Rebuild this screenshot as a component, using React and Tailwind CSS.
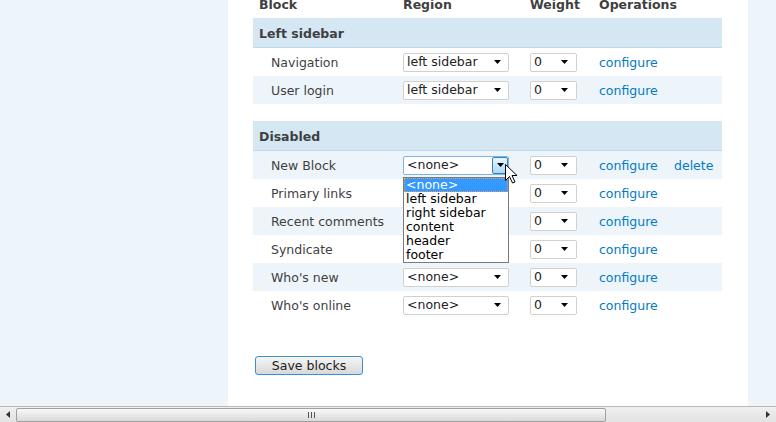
import React from "react";

function Arrow() {
  return (
    <svg width="7" height="4" viewBox="0 0 7 4" className="block">
      <path d="M0 0 H7 L3.5 4 Z" fill="#000" />
    </svg>
  );
}

function RegionSelect({ value }) {
  return (
    <div className="w-[106px] h-[19px] border border-[#d0d0d0] rounded-[2px] bg-white flex items-center justify-between pl-[3px] pr-[7px] text-[#222]">
      <span className="pt-[1px]">{value}</span>
      <Arrow />
    </div>
  );
}

function WeightSelect() {
  return (
    <div className="w-[47px] h-[19px] border border-[#d0d0d0] rounded-[2px] bg-white flex items-center justify-between pl-[3px] pr-[8px] text-[#222]">
      <span className="pt-[1px]">0</span>
      <Arrow />
    </div>
  );
}

function ActiveSelect() {
  return (
    <div className="relative w-[106px] h-[19px] border border-[#7eb4ea] rounded-[2px] bg-white flex items-center pl-[3px] text-[#222]">
      <span className="pt-[1px]">&lt;none&gt;</span>
      <div className="absolute right-[0px] top-[0px] w-[16px] h-[17px] border border-[#3c7fb1] rounded-[2px] bg-gradient-to-b from-[#eaf6fd] to-[#a7d9f5] flex items-center justify-center">
        <Arrow />
      </div>
      <div className="absolute left-[-1px] top-[20px] w-[106px] border border-[#7a7a7a] bg-white z-10 leading-[14px] text-black">
        <div className="h-[14px] bg-[#3399ff] text-white border border-dotted border-[#e0a060] pl-[1px] leading-[12px]">&lt;none&gt;</div>
        <div className="h-[14px] pl-[2px]">left sidebar</div>
        <div className="h-[14px] pl-[2px]">right sidebar</div>
        <div className="h-[14px] pl-[2px]">content</div>
        <div className="h-[14px] pl-[2px]">header</div>
        <div className="h-[14px] pl-[2px]">footer</div>
      </div>
      <svg className="absolute left-[101px] top-[7px] z-20" width="13" height="20" viewBox="0 0 13 20">
        <path d="M0.5 0.5 L0.5 16.5 L4.5 12.5 L7.5 19 L10 18 L7 11.5 L12 11.5 Z" fill="#fff" stroke="#000" strokeWidth="1" strokeLinejoin="miter" />
      </svg>
    </div>
  );
}

function Row({ name, odd, region, active, del }) {
  return (
    <div className={odd ? "h-[28px] bg-[#edf5fa] flex items-center" : "h-[28px] bg-white flex items-center"}>
      <div className="w-[150px] pl-[18px] pt-[2px] text-[#3f3f3f]">{name}</div>
      <div className="w-[127px]">{active ? <ActiveSelect /> : <RegionSelect value={region} />}</div>
      <div className="w-[69px]"><WeightSelect /></div>
      <div className="w-[75px] pt-[2px] text-[#027ac6]">configure</div>
      {del ? <div className="pt-[2px] text-[#027ac6]">delete</div> : null}
    </div>
  );
}

function RegionHeader({ title }) {
  return (
    <div className="h-[30px] bg-[#d4e7f3] border-b border-[#bcdaee] flex items-center pl-[6px] pt-[3px] font-bold text-[#3f3f3f]">
      {title}
    </div>
  );
}

export default function App() {
  return (
    <div className="w-[776px] h-[422px] overflow-hidden flex flex-col bg-[#edf5fa] text-[12.5px] text-[#494949] font-['DejaVu_Sans',Verdana,sans-serif]">
      <div className="flex h-[406px]">
        <div className="w-[228px] bg-[#edf5fa]" />
        <div className="w-[520px] bg-white pl-[25px] pr-[26px]">
          <div className="h-[18px] overflow-hidden flex font-bold text-[#3f3f3f]">
            <div className="w-[150px] pl-[6px] -mt-[2px] leading-[14px]">Block</div>
            <div className="w-[127px] -mt-[2px] leading-[14px]">Region</div>
            <div className="w-[69px] -mt-[2px] leading-[14px]">Weight</div>
            <div className="-mt-[2px] leading-[14px]">Operations</div>
          </div>
          <RegionHeader title="Left sidebar" />
          <Row name="Navigation" region="left sidebar" />
          <Row name="User login" region="left sidebar" odd />
          <div className="h-[17px]" />
          <RegionHeader title="Disabled" />
          <Row name="New Block" odd active del />
          <Row name="Primary links" region="<none>" />
          <Row name="Recent comments" region="<none>" odd />
          <Row name="Syndicate" region="<none>" />
          <Row name="Who's new" region="<none>" odd />
          <Row name="Who's online" region="<none>" />
          <div className="pt-[37px] pl-[2px]">
            <button className="w-[108px] h-[19px] border border-[#3c8fd0] rounded-[3px] bg-gradient-to-b from-[#f6f6f6] to-[#d8d8d8] text-[#222] text-[12.5px] leading-[15px] font-['DejaVu_Sans',Verdana,sans-serif] flex items-center justify-center">
              Save blocks
            </button>
          </div>
        </div>
        <div className="flex-1 bg-[#edf5fa]" />
      </div>
      <div className="h-[16px] border-t border-[#b8b8b8] bg-gradient-to-b from-[#f0f0f0] to-[#e2e2e2] flex items-center relative">
        <div className="w-[16px] h-full flex items-center justify-center">
          <svg width="4" height="7" viewBox="0 0 4 7"><path d="M4 0 V7 L0 3.5 Z" fill="#333" /></svg>
        </div>
        <div className="w-[590px] h-[14px] border border-[#a0a0a0] rounded-[2px] bg-gradient-to-b from-[#f8f8f8] to-[#dadada] flex items-center justify-center">
          <svg width="7" height="6" viewBox="0 0 7 6">
            <path d="M0.5 0 V6 M3.5 0 V6 M6.5 0 V6" stroke="#555" strokeWidth="1" />
          </svg>
        </div>
        <div className="flex-1" />
        <div className="w-[16px] h-full flex items-center justify-center">
          <svg width="4" height="7" viewBox="0 0 4 7"><path d="M0 0 V7 L4 3.5 Z" fill="#333" /></svg>
        </div>
      </div>
    </div>
  );
}
